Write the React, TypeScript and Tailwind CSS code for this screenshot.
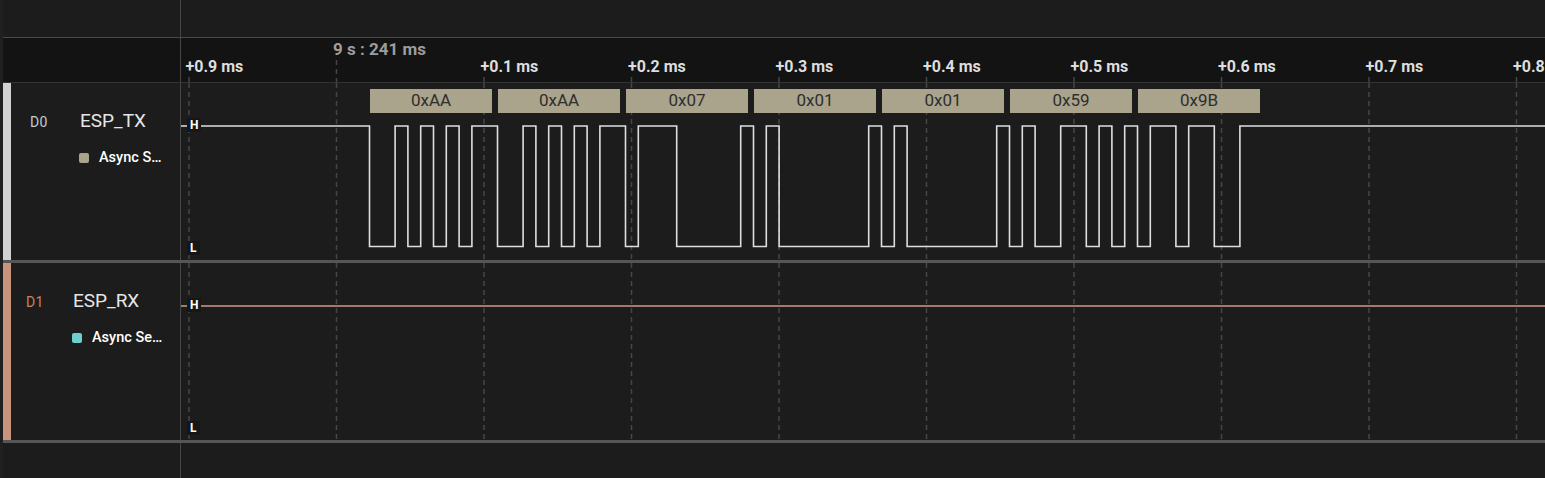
import React from "react";

const BIT = 12.8;
const FRAME = BIT * 10;
const T0 = 188.5;
const TX_BYTES = [0xaa, 0xaa, 0x07, 0x01, 0x01, 0x59, 0x9b];
const CHART_W = 1364;
const ROW_H = 177;

const TICKS = Array.from({ length: 10 }, (_, i) => 8 + 147.5 * i);
const TICK_LABELS = [
  "+0.9 ms",
  "9 s : 241 ms",
  "+0.1 ms",
  "+0.2 ms",
  "+0.3 ms",
  "+0.4 ms",
  "+0.5 ms",
  "+0.6 ms",
  "+0.7 ms",
  "+0.8 ms",
];

const hex = (b: number) => "0x" + b.toString(16).toUpperCase().padStart(2, "0");

function wavePath(bytes: number[], hi: number, lo: number) {
  let d = `M0 ${hi}`;
  let level = 1;
  let x = T0;
  bytes.forEach((byte) => {
    const bits = [0];
    for (let i = 0; i < 8; i++) bits.push((byte >> i) & 1);
    bits.push(1);
    bits.forEach((b) => {
      if (b !== level) {
        d += ` H${x.toFixed(1)} V${b ? hi : lo}`;
        level = b;
      }
      x += BIT;
    });
  });
  d += ` H${CHART_W}`;
  return d;
}

function Grid({ from = 0, h }: { from?: number; h: number }) {
  return (
    <svg className="absolute left-0 top-0" width={CHART_W} height={h}>
      {TICKS.map((x, i) => (
        <line
          key={i}
          x1={x}
          x2={x}
          y1={from}
          y2={h}
          stroke="#454545"
          strokeWidth={1.5}
          strokeDasharray="5 4"
        />
      ))}
    </svg>
  );
}

function LevelTag({ text, top }: { text: string; top: string }) {
  return (
    <span
      className={`absolute left-[6px] ${top} z-10 h-[14px] bg-[#161616] px-[3px] text-[12px] font-bold leading-[14px] text-white`}
    >
      {text}
    </span>
  );
}

type Channel = {
  id: string;
  name: string;
  proto: string;
  strip: string;
  idColor: string;
  dot: string;
  line: string;
  idPad: string;
  idW: string;
  dotPad: string;
  bytes?: number[];
};

const CHANNELS: Channel[] = [
  {
    id: "D0",
    name: "ESP_TX",
    proto: "Async S…",
    strip: "bg-[#d2d2d2]",
    idColor: "text-[#c3cad2]",
    dot: "bg-[#aba48c]",
    line: "#dedede",
    idPad: "pl-[19px]",
    idW: "w-[50px]",
    dotPad: "pl-[68px]",
    bytes: TX_BYTES,
  },
  {
    id: "D1",
    name: "ESP_RX",
    proto: "Async Se…",
    strip: "bg-[#c8947b]",
    idColor: "text-[#c8825f]",
    dot: "bg-[#6fcfcf]",
    line: "#cf9c84",
    idPad: "pl-[15px]",
    idW: "w-[47px]",
    dotPad: "pl-[61px]",
  },
];

function ChannelRow({ ch }: { ch: Channel }) {
  return (
    <div className="flex h-[177px]">
      <div className={`w-[8px] ${ch.strip}`} />
      <div className="w-[170px] border-r border-[#474747]">
        <div className={`flex items-baseline pt-[28px] ${ch.idPad}`}>
          <span className={`${ch.idW} text-[14px] tracking-wide ${ch.idColor}`}>{ch.id}</span>
          <span className="text-[19px] leading-[19px] text-[#e6e6e6]">{ch.name}</span>
        </div>
        <div className={`mt-[18px] flex items-center gap-[10px] ${ch.dotPad}`}>
          <span className={`h-[10px] w-[10px] rounded-[2px] ${ch.dot}`} />
          <span className="text-[14.5px] font-medium leading-[14px] text-white">{ch.proto}</span>
        </div>
      </div>
      <div className="relative flex-1 overflow-hidden">
        <Grid h={ROW_H} />
        {ch.bytes?.map((b, i) => (
          <div
            key={i}
            className="absolute top-[6px] flex h-[24px] w-[122px] items-center justify-center bg-[#aaa48c] text-[17px] text-[#2e2e2e]"
            style={{ left: T0 + 0.5 + i * FRAME }}
          >
            {hex(b)}
          </div>
        ))}
        <svg className="absolute left-0 top-0" width={CHART_W} height={ROW_H}>
          <path
            d={wavePath(ch.bytes ?? [], 43, 163.5)}
            fill="none"
            stroke={ch.line}
            strokeWidth={1.6}
          />
        </svg>
        <LevelTag text="H" top="top-[35px]" />
        <LevelTag text="L" top="top-[158px]" />
      </div>
    </div>
  );
}

export default function App() {
  return (
    <div className="flex h-[478px] w-[1545px] overflow-hidden bg-[#1c1c1c] font-['Roboto',sans-serif]">
      <div className="w-[3px] bg-[#202020]" />
      <div className="flex flex-1 flex-col">
        {/* top bar */}
        <div className="flex h-[38px] border-b border-[#4a4a4a]">
          <div className="w-[178px] border-r border-[#474747]" />
          <div className="flex-1" />
        </div>

        {/* time ruler */}
        <div className="flex h-[45px] border-b border-[#333] bg-[#131313]">
          <div className="w-[178px] border-r border-[#474747]" />
          <div className="relative flex-1 overflow-hidden">
            <svg className="absolute left-0 top-0" width={CHART_W} height={45}>
              {TICKS.map((x, i) => (
                <line
                  key={i}
                  x1={x}
                  x2={x}
                  y1={i === 1 ? 22 : 39}
                  y2={45}
                  stroke="#454545"
                  strokeWidth={1.5}
                  strokeDasharray="5 4"
                />
              ))}
            </svg>
            {TICKS.map((x, i) => (
              <span
                key={i}
                className={
                  i === 1
                    ? "absolute top-[3px] whitespace-nowrap text-[17px] font-bold leading-[17px] text-[#9d9d9d]"
                    : "absolute top-[21px] whitespace-nowrap text-[16px] font-bold leading-[16px] text-[#dedede]"
                }
                style={{ left: x - 3.5 }}
              >
                {TICK_LABELS[i]}
              </span>
            ))}
          </div>
        </div>

        <ChannelRow ch={CHANNELS[0]} />
        <div className="h-[3px] bg-[#565656]" />
        <ChannelRow ch={CHANNELS[1]} />
        <div className="h-[3px] bg-[#565656]" />

        {/* bottom */}
        <div className="flex flex-1">
          <div className="w-[178px] border-r border-[#474747]" />
          <div className="flex-1" />
        </div>
      </div>
    </div>
  );
}
